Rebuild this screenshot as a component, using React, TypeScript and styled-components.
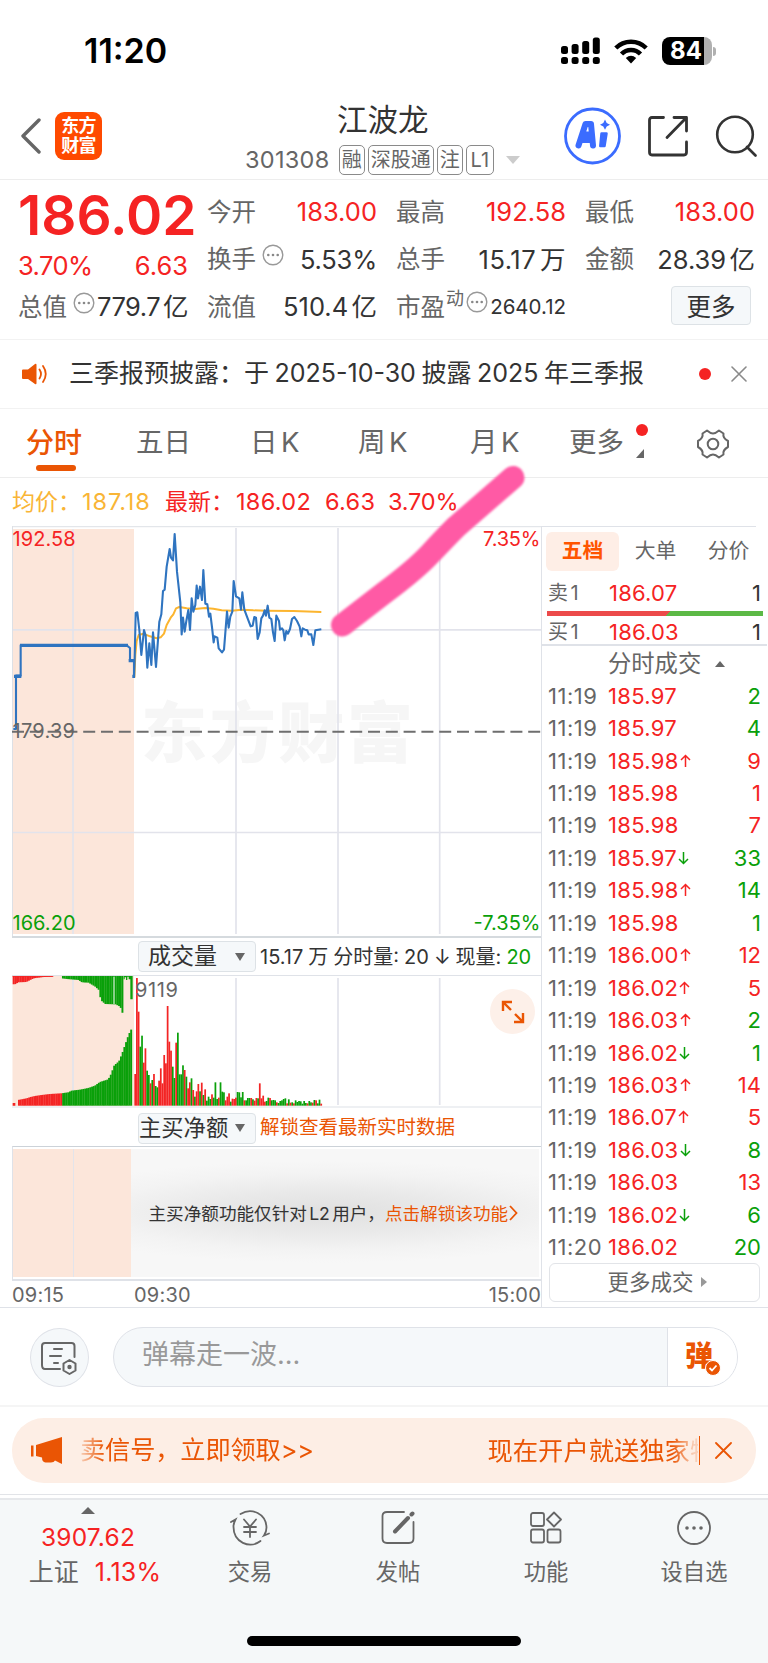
import React from "react";
import styled, { createGlobalStyle } from "styled-components";

const RED = "#f52323";
const GREEN = "#0aa00a";
const ORANGE = "#ea5504";
const GREY = "#666";
const DARK = "#333";
const PEACH = "#fce6da";
const LINE = "#dfe2e8";

const Global = createGlobalStyle`
  * { box-sizing: border-box; }
  body { margin: 0; background: #fff; }
  svg { display: block; flex: none; }
`;

const Page = styled.div`
  position: relative;
  width: 768px;
  height: 1663px;
  overflow: hidden;
  background: #fff;
  color: ${DARK};
  font-family: Inter, "Noto Sans CJK SC", sans-serif;
  line-height: 1;
`;

const Txt = styled.span<{ $s: number; $c?: string; $ls?: number; $w?: number; $ws?: number }>`
  flex: none;
  white-space: pre;
  font-size: ${(p) => p.$s}px;
  color: ${(p) => p.$c ?? DARK};
  letter-spacing: ${(p) => p.$ls ?? 0}px;
  word-spacing: ${(p) => p.$ws ?? -0.15}em;
  font-weight: ${(p) => p.$w ?? 400};
`;

/* Status bar */
const StatusBar = styled.div`
  height: 100px;
  padding: 2px 52px 0 84px;
  display: flex;
  align-items: center;
  justify-content: space-between;
`;
const StatusIcons = styled.div`
  display: flex;
  align-items: center;
  gap: 14px;
`;
const Battery = styled.div`
  display: flex;
  align-items: center;
  gap: 1px;
`;
const BatteryBody = styled.div`
  width: 50px;
  height: 28px;
  padding-right: 2px;
  border-radius: 8px;
  background: linear-gradient(90deg, #000 84%, #b0b0b0 84%);
  display: flex;
  align-items: center;
  justify-content: center;
`;
const BatteryTip = styled.div`
  width: 3px;
  height: 9px;
  border-radius: 0 3px 3px 0;
  background: #b0b0b0;
`;

/* Header */
const Header = styled.header`
  height: 80px;
  display: flex;
  border-bottom: 1px solid #ededed;
  padding: 0 10px 0 20px;
`;
const HeaderLeft = styled.div`
  width: 225px;
  height: 71px;
  display: flex;
  align-items: center;
  gap: 13px;
`;
const Logo = styled.div`
  width: 47px;
  height: 48px;
  border-radius: 9px;
  background: #ff4a00;
  display: flex;
  flex-direction: column;
  align-items: center;
  justify-content: center;
  gap: 2px;
`;
const HeaderTitle = styled.div`
  width: 277px;
  display: flex;
  flex-direction: column;
`;
const TitleRow = styled.div`
  height: 41px;
  padding: 5px 0 0 92px;
`;
const TagRow = styled.div`
  display: flex;
  align-items: center;
  gap: 3px;
  height: 40px;
  padding-top: 1px;
`;
const Tag = styled.span<{ $w: number }>`
  width: ${(p) => p.$w}px;
  height: 30px;
  border: 1.5px solid #8a8a8a;
  border-radius: 5px;
  display: flex;
  align-items: center;
  justify-content: center;
`;
const HeaderRight = styled.div`
  flex: 1;
  height: 71px;
  padding-left: 42px;
  display: flex;
  align-items: center;
  gap: 27px;
`;

/* Quote block */
const Quote = styled.section`
  height: 160px;
  padding: 8px 13px 0 18px;
  border-bottom: 1px solid #f2f2f2;
  display: grid;
  grid-template-columns: repeat(4, 170px);
  column-gap: 19px;
`;
const QuoteCol = styled.div`
  display: flex;
  flex-direction: column;
`;
const QuoteRow = styled.div<{ $h: number }>`
  height: ${(p) => p.$h}px;
  display: flex;
  align-items: center;
  justify-content: space-between;
`;
const LabelGroup = styled.div`
  display: flex;
  align-items: center;
`;
const Raised = styled.span<{ $l: number; $t: number }>`
  margin-left: ${(p) => p.$l}px;
  margin-top: -${(p) => p.$t}px;
`;
const MoreButton = styled.button`
  width: 80px;
  height: 39px;
  margin: -4px 4px 0 auto;
  padding: 0;
  border: 1.5px solid #dde2e6;
  border-radius: 4px;
  background: #f5f8fa;
  font-family: inherit;
`;

/* Notice */
const Notice = styled.div`
  height: 69px;
  padding: 0 21px 1px 22px;
  border-bottom: 1px solid #f2f2f2;
  display: flex;
  align-items: center;
`;
const NoticeText = styled.div`
  width: 628px;
  padding-left: 21px;
`;
const Dot = styled.i`
  display: block;
  width: 12px;
  height: 12px;
  border-radius: 50%;
  background: ${RED};
`;

/* Tabs */
const Tabs = styled.nav`
  height: 69px;
  border-bottom: 1px solid #ededed;
  display: flex;
  padding-left: 26px;
`;
const Tab = styled.div<{ $w: number }>`
  width: ${(p) => p.$w}px;
  height: 64px;
  display: flex;
  flex-direction: column;
  align-items: flex-start;
  padding-top: 20px;
`;
const Underline = styled.div`
  width: 40px;
  height: 6px;
  margin: 8px 0 0 10px;
  border-radius: 3px;
  background: ${ORANGE};
`;
const MoreTab = styled.div`
  display: flex;
  gap: 12px;
`;
const MoreMarks = styled.div`
  display: flex;
  flex-direction: column;
  gap: 13px;
  margin-top: -5px;
`;

const Legend = styled.div`
  height: 48px;
  padding: 0 0 0 12px;
  display: flex;
  align-items: center;
`;
const LegendItem = styled.div<{ $w: number }>`
  width: ${(p) => p.$w}px;
`;

/* Main area */
const Main = styled.main`
  height: 782px;
  display: flex;
  border-bottom: 1px solid ${LINE};
`;
const ChartCol = styled.div`
  width: 542px;
  padding-left: 12px;
  border-right: 1px solid ${LINE};
`;
const PanelHead = styled.div<{ $h: number; $top?: number }>`
  height: ${(p) => p.$h}px;
  padding: ${(p) => p.$top ?? 0}px 0 0 126px;
  display: flex;
  align-items: center;
  gap: 4px;
`;
const Dropdown = styled.div<{ $pad: number }>`
  width: 118px;
  height: 31px;
  padding: 0 10px 0 ${(p) => p.$pad}px;
  border: 1.5px solid #dde2e6;
  border-radius: 4px;
  background: #f5f8fa;
  display: flex;
  align-items: center;
  justify-content: space-between;
`;
const VolumeWrap = styled.div`
  position: relative;
  height: 133px;
  border-top: 1px solid ${LINE};
  border-bottom: 2px solid #eef0f3;
`;
const ExpandButton = styled.div`
  position: absolute;
  right: 6px;
  top: 13px;
  width: 45px;
  height: 45px;
  border-radius: 50%;
  background: #fdf0e9;
  display: flex;
  align-items: center;
  justify-content: center;
`;
const LockPanel = styled.div`
  height: 135px;
  border-top: 1px solid #ccd2d8;
  border-bottom: 2px solid ${LINE};
  border-left: 1px solid ${LINE};
  padding: 2px 2px;
  display: flex;
`;
const AuctionBlock = styled.div`
  width: 117.5px;
  margin-left: -2px;
  background: linear-gradient(90deg, transparent 60px, #e3e4ea 60px, #e3e4ea 61.5px, transparent 61.5px) ${PEACH};
`;
const LockMessage = styled.div`
  flex: 1;
  background:
    radial-gradient(ellipse 75% 40% at 48% 49%, #e0e0e0 0%, #e9e9e9 40%, #f3f3f3 75%, rgba(247, 247, 247, 0) 100%)
    #f7f7f7;
  padding: 2px 0 0 18px;
  display: flex;
  align-items: center;
`;
const TimeAxis = styled.div`
  height: 27px;
  padding-top: 1px;
  display: flex;
  align-items: center;
`;
const AxisCell = styled.div<{ $w?: number }>`
  width: ${(p) => (p.$w ? p.$w + "px" : "auto")};
  margin-left: ${(p) => (p.$w ? "0" : "auto")};
`;

const SideCol = styled.div`
  width: 226px;
  display: flex;
  flex-direction: column;
`;
const SideTabs = styled.div`
  height: 49px;
  padding: 5px 0 0 4px;
  border-top: 1px solid ${LINE};
  margin-right: 12px;
  display: flex;
`;
const SideTab = styled.div<{ $on?: boolean }>`
  flex: none;
  width: 73px;
  height: 39px;
  border-radius: 6px;
  background: ${(p) => (p.$on ? "#feeee6" : "transparent")};
  display: flex;
  align-items: center;
  justify-content: center;
`;
const OrderRow = styled.div<{ $h: number; $top?: number }>`
  height: ${(p) => p.$h}px;
  padding: ${(p) => p.$top ?? 0}px 7px 0 6px;
  display: flex;
  align-items: center;
`;
const SideCell = styled.div<{ $w: number }>`
  width: ${(p) => p.$w}px;
`;
const Qty = styled.div`
  margin-left: auto;
`;
const RatioBar = styled.div`
  height: 5px;
  margin: 0 5px;
  background: linear-gradient(135deg, #ec4a4a 56%, #5cb946 56%);
`;
const DealHead = styled.div`
  height: 35px;
  margin-right: 1px;
  border-top: 2px solid ${LINE};
  padding: 3px 0 0 66px;
  display: flex;
  align-items: center;
  gap: 14px;
`;
const MoreDeals = styled.div`
  width: 211px;
  height: 39px;
  margin: 0 0 0 7px;
  padding-left: 5px;
  border: 1.5px solid #e2e4e8;
  border-radius: 6px;
  display: flex;
  align-items: center;
  justify-content: center;
  gap: 7px;
`;

/* Comment bar */
const CommentBar = styled.div`
  height: 99px;
  padding: 19px 30px;
  border-bottom: 2px solid #f5f5f5;
  display: flex;
  gap: 24px;
`;
const RoundButton = styled.div`
  width: 59px;
  height: 59px;
  margin-top: 1px;
  border: 1.5px solid ${LINE};
  border-radius: 50%;
  background: #f5f8fa;
  display: flex;
  align-items: center;
  justify-content: center;
`;
const InputPill = styled.div`
  width: 626px;
  height: 60px;
  border: 1.5px solid ${LINE};
  border-radius: 30px;
  background: #f5f8fa;
  display: flex;
  overflow: hidden;
`;
const InputArea = styled.div`
  flex: 1;
  padding: 13px 0 0 28px;
`;
const DanmuToggle = styled.div`
  width: 70px;
  border-left: 1.5px solid ${LINE};
  background: #fff;
  padding: 14px 0 0 17px;
  display: flex;
`;
const CheckBadge = styled.div`
  margin: 18px 0 0 -8px;
`;

/* Banner */
const BannerWrap = styled.div`
  height: 88px;
  padding: 11px 12px 0;
  border-bottom: 1px solid #e2e4e8;
`;
const Banner = styled.div`
  height: 65px;
  border-radius: 32px;
  background: #fdeee5;
  display: flex;
  align-items: center;
  padding: 0 24px 0 19px;
`;
const Marquee = styled.div`
  width: 618px;
  margin-left: 18px;
  overflow: hidden;
  display: flex;
  align-items: center;
  justify-content: space-between;
  height: 40px;
  mask-image: linear-gradient(90deg, rgba(0, 0, 0, 0.2) 0, #000 24px, #000 592px, rgba(0, 0, 0, 0.2) 614px);
`;
const MarqueeEnd = styled.div`
  width: 210px;
  overflow: hidden;
`;
const BannerRule = styled.div`
  width: 1.5px;
  height: 29px;
  background: ${ORANGE};
  margin: 0 15px 0 1px;
`;

/* Bottom navigation */
const BottomNav = styled.footer`
  height: 165px;
  margin-top: 3px;
  border-top: 2px solid #e6e8eb;
  background: #f5f8f9;
  display: flex;
  flex-direction: column;
  align-items: center;
`;
const NavItems = styled.div`
  width: 768px;
  height: 136px;
  display: flex;
`;
const IndexCell = styled.div`
  width: 176px;
  padding-top: 7px;
  display: flex;
  flex-direction: column;
  align-items: center;
`;
const IndexValue = styled.div`
  display: flex;
  height: 26px;
  align-items: center;
  margin-top: 10px;
`;
const IndexChange = styled.div`
  display: flex;
  height: 26px;
  align-items: center;
  gap: 16px;
  margin: 9px 0 0 14px;
`;
const NavItem = styled.div`
  width: 148px;
  padding-top: 10px;
  display: flex;
  flex-direction: column;
  align-items: center;
  gap: 15px;
`;
const HomeIndicator = styled.div`
  width: 274px;
  height: 10px;
  border-radius: 5px;
  background: #000;
`;

const Marker = styled.svg`
  position: absolute;
  left: 320px;
  top: 450px;
  filter: blur(1px);
`;

const MoreDots = ({ size = 22 }: { size?: number }) => (
  <svg width={size} height={size} viewBox="0 0 22 22" fill="none" stroke="#999" strokeWidth="1.4">
    <circle cx="11" cy="11" r="9.8" />
    <g fill="#888" stroke="none">
      <circle cx="6.3" cy="11" r="1.3" />
      <circle cx="11" cy="11" r="1.3" />
      <circle cx="15.7" cy="11" r="1.3" />
    </g>
  </svg>
);

const Triangle = ({ w, h, up, color = GREY }: { w: number; h: number; up?: boolean; color?: string }) => (
  <svg width={w} height={h}>
    <path d={up ? `M0 ${h}L${w / 2} 0L${w} ${h}z` : `M0 0L${w / 2} ${h}L${w} 0z`} fill={color} />
  </svg>
);

const Cross = ({ size, color, sw }: { size: number; color: string; sw: number }) => (
  <svg width={size} height={size}>
    <path d={`M1 1L${size - 1} ${size - 1}M${size - 1} 1L1 ${size - 1}`} stroke={color} strokeWidth={sw} strokeLinecap="round" />
  </svg>
);

const PRICE =
  "402,488 404,430 407,294 412,292 418,345 424,420 432,345 437,362 442,458 448,385 454,450 459,352 468,456 478,320 484,298 489,228 494,224 500,155 509,102 513,128 519,136 524,57 531,170 541,262 545,358 549,308 554,350 559,318 565,285 570,345 575,250 580,290 586,270 590,212 594,250 600,215 606,255 610,165 616,266 622,268 627,305 631,296 637,345 641,382 644,364 652,368 656,400 666,412 672,404 681,290 686,338 691,305 697,290 701,198 708,244 718,250 723,284 727,232 733,284 742,308 752,334 758,332 763,306 768,308 773,372 779,352 784,310 789,302 794,286 798,302 803,272 808,308 814,312 819,352 824,378 829,302 837,318 840,344 846,340 850,346 854,376 859,348 864,356 870,342 876,312 883,306 891,318 899,335 904,364 908,340 915,344 922,346 926,358 934,358 940,390 946,346 964,343";
const AVERAGE =
  "403,488 406,420 410,378 416,360 430,356 450,364 470,370 482,367 492,356 500,330 512,308 520,298 528,280 538,276 560,280 585,282 615,279 640,281 665,286 695,287 725,284 760,286 800,287 880,288 964,291";

const svgFont = { fontFamily: 'Inter, "Noto Sans CJK SC", sans-serif' };

const PriceChart = () => (
  <svg width="529" height="412" viewBox="12 526 529 412" {...svgFont}>
    <rect x="12.5" y="529" width="121.5" height="405" fill={PEACH} />
    <text x="141" y="757" fontSize="66" fontWeight="900" textLength="272" fill="#f6f6f6">东方财富</text>
    <g stroke="#e2e3eb" strokeWidth="1.7">
      <path d="M73 529V934M236 528V934M338 528V934M439.7 528V934M12 629.8H541M12 832.5H541" />
    </g>
    <path d="M12 526.7H541M12.5 526V938" stroke="#dde0e5" strokeWidth="1" />
    <path d="M12 937H541" stroke="#d5dade" strokeWidth="2" />
    <path d="M12 731.8H541" stroke="#6e6e6e" strokeWidth="2" strokeDasharray="12 5.8" />
    <g transform="translate(0 515) scale(.33333)" fill="none" strokeLinejoin="round">
      <polyline points={AVERAGE} stroke="#fcb52f" strokeWidth="6" />
      <polyline points={PRICE} stroke="#2f74c0" strokeWidth="6.300" />
      <path d="M40 642H48V482H62V391H380L390 399V437H402V486" stroke="#2f74c0" strokeWidth="6.300" />
      <path d="M60 391H384M42 484H64M386 437H402M397 484H405" stroke="#2f74c0" strokeWidth="10" />
    </g>
    <g fontSize="20">
      <text x="12.5" y="545.8" textLength="63" fill={RED}>192.58</text>
      <text x="483" y="545.8" textLength="57.5" fill={RED}>7.35%</text>
      <text x="12.5" y="738" textLength="62.5" fill={GREY}>179.39</text>
      <text x="12.5" y="929.5" textLength="63" fill={GREEN}>166.20</text>
      <text x="473.5" y="929.5" textLength="67" fill={GREEN}>-7.35%</text>
    </g>
  </svg>
);

const VOLUME =
  "462r 174r 275r 380g 347g 428r 385r 452g 465g 490r 480g 462r 498g 502g 482r 445r 490r 405r 430r 258r 365r 392r 440g 474g 368r 338g 463g 463g 436g 450r 470g 505r 487r 475g 510r 530g 514r 492r 514g 488r 525g 508r 542g 530g 537g 523r 533g 487g 537g 533r 487g 515g 517g 541r 530r 520r 545g 536r 537r 533r 516g 517g 532g 516g 541r 541g 534g 534g 534r 538g 542r 534r 535g 490r 535r 527r 545r 543g 533g 534r 541g 540g 541g 547r 549g 543g 541g 537g 535g 550r 538g 548r 547g 550r 541g 546g 543g 544g 551g 543g 549g 550r 543g 547g 548r 540g 541r 550g 539g 551r".split(
    " "
  );

const AUCTION_LOW: [number, number][] = [
  [54, 540], [80, 535], [92, 531], [105, 528], [125, 525], [150, 522], [184, 520], [205, 517], [215, 512], [240, 509],
  [265, 504], [285, 497], [300, 486], [325, 478], [333, 463], [343, 436], [357, 424], [366, 402], [376, 373], [386, 344], [394, 328], [400, 328],
];
const AUCTION_TOP: [number, number][] = [
  [38, 193], [48, 192], [52, 187], [78, 186], [90, 180], [100, 175], [130, 171], [156, 170], [184, 175], [200, 177], [235, 180],
  [245, 187], [265, 188], [285, 200], [298, 212], [301, 240], [315, 252], [346, 253], [360, 260], [367, 280], [372, 281],
];

const level = (pts: [number, number][], x: number) => {
  for (let i = 1; i < pts.length; i++) {
    if (x <= pts[i][0]) {
      const [x0, y0] = pts[i - 1];
      const [x1, y1] = pts[i];
      return y0 + ((y1 - y0) * (x - x0)) / (x1 - x0);
    }
  }
  return pts[pts.length - 1][1];
};
const steps = (from: number, to: number) => Array.from({ length: Math.round((to - from) / 5.1) }, (_, i) => from + i * 5.1);

const VolumeChart = () => (
  <svg width="529" height="130" viewBox="12 976 529 130" {...svgFont}>
    <rect x="12.5" y="976" width="121.5" height="130" fill={PEACH} />
    <path d="M73 976V1105M236 978V1105M338 978V1105M439.7 978V1105" stroke="#e2e3eb" strokeWidth="1.7" />
    <g transform="translate(0 920) scale(.33333)">
      {steps(54, 398).map((x) => {
        const y = level(AUCTION_LOW, x + 3);
        return <rect key={x} x={x} y={y} width="5.8" height={557 - y} fill={x < 182 ? "#f32424" : GREEN} />;
      })}
      {steps(38, 371).map((x) => {
        const y = level(AUCTION_TOP, x + 2);
        return <rect key={x} x={x} y="166" width="5.8" height={y - 166} fill={x < 158 ? "#f32424" : x < 184 ? PEACH : GREEN} />;
      })}
      <path d="M38 166H158V170H38M38 549H46V557H38" fill="#f32424" />
      <path d="M371 166H398V238H391V178H386V170H382V180H378V172H374V178H371" fill={GREEN} />
      <path d="M342 170V252" stroke="#fff" strokeWidth="3" />
      {VOLUME.map((v, i) => {
        const y = parseInt(v, 10);
        return <rect key={i} x={403 + i * 5.12} y={y} width="5.2" height={557 - y} fill={v.endsWith("r") ? "#f32424" : GREEN} />;
      })}
    </g>
    <text x="135" y="997" fontSize="20" textLength="43" fill={GREY}>9119</text>
  </svg>
);

type Deal = [string, string, "u" | "d" | "", number, "r" | "g"];
const DEALS: Deal[] = [
  ["11:19", "185.97", "", 2, "g"],
  ["11:19", "185.97", "", 4, "g"],
  ["11:19", "185.98", "u", 9, "r"],
  ["11:19", "185.98", "", 1, "r"],
  ["11:19", "185.98", "", 7, "r"],
  ["11:19", "185.97", "d", 33, "g"],
  ["11:19", "185.98", "u", 14, "g"],
  ["11:19", "185.98", "", 1, "g"],
  ["11:19", "186.00", "u", 12, "r"],
  ["11:19", "186.02", "u", 5, "r"],
  ["11:19", "186.03", "u", 2, "g"],
  ["11:19", "186.02", "d", 1, "g"],
  ["11:19", "186.03", "u", 14, "r"],
  ["11:19", "186.07", "u", 5, "r"],
  ["11:19", "186.03", "d", 8, "g"],
  ["11:19", "186.03", "", 13, "r"],
  ["11:19", "186.02", "d", 6, "g"],
  ["11:20", "186.02", "", 20, "g"],
];

const TickArrow = ({ dir }: { dir: "u" | "d" }) => (
  <svg width="11" height="14" fill="none" stroke={dir === "u" ? RED : GREEN} strokeWidth="1.5">
    <path d={dir === "u" ? "M5.5 13V1.5M1 6L5.5 1.5L10 6" : "M5.5 1V12.5M1 8L5.5 12.5L10 8"} />
  </svg>
);

const Stat = ({ h, label, value, red, dots, ls }: { h: number; label: string; value: string; red?: boolean; dots?: boolean; ls?: number }) => (
  <QuoteRow $h={h}>
    <LabelGroup>
      <Txt $s={24.5} $c={GREY}>{label}</Txt>
      {dots && <Raised $l={6} $t={9}><MoreDots /></Raised>}
    </LabelGroup>
    <Txt $s={25.5} $c={red ? RED : DARK} $ls={ls ?? 0}>{value}</Txt>
  </QuoteRow>
);

const TABS: [string, number][] = [["五日", 114], ["日 K", 108], ["周 K", 112], ["月 K", 99]];

export default function App() {
  return (
    <Page>
      <Global />
      <StatusBar>
        <Txt $s={34} $c="#000" $w={600}>11:20</Txt>
        <StatusIcons>
          <svg width="39" height="28">
            {[0, 1, 2, 3].map((i) => (
              <g key={i}>
                <rect x={i * 10.6} y={[9, 7, 4, 0.5][i]} width="7" height={[8, 10, 13, 16.5][i]} rx="2.5" />
                <rect x={i * 10.6} y="20" width="7" height="7" rx="2.5" />
              </g>
            ))}
          </svg>
          <svg width="34" height="25" viewBox="0 0 34 25" fill="none" stroke="#000" strokeWidth="4.4">
            <path d="M1.8 9C10 .6 24 .6 32.200 9" />
            <path d="M7.500 15C12.500 9.600 21.500 9.600 26.500 15" />
            <path d="M17 24.500L11.800 19Q17 14.500 22.200 19z" fill="#000" stroke="none" />
          </svg>
          <Battery>
            <BatteryBody><Txt $s={24} $c="#fff" $w={700}>84</Txt></BatteryBody>
            <BatteryTip />
          </Battery>
        </StatusIcons>
      </StatusBar>

      <Header>
        <HeaderLeft>
          <svg width="22" height="36" fill="none" stroke={GREY} strokeWidth="3.400" strokeLinecap="round" strokeLinejoin="round">
            <path d="M19 2L3 18L19 34" />
          </svg>
          <Logo>
            <Txt $s={18} $c="#fff" $w={600} $ls={-0.8}>东方</Txt>
            <Txt $s={18} $c="#fff" $w={600} $ls={-0.8}>财富</Txt>
          </Logo>
        </HeaderLeft>
        <HeaderTitle>
          <TitleRow><Txt $s={30.500}>江波龙</Txt></TitleRow>
          <TagRow>
            <LabelGroup><Txt $s={23.500} $c={GREY} $ls={0.3} $ws={-0.03}>301308 </Txt></LabelGroup>
            <Tag $w={26}><Txt $s={20} $c={GREY}>融</Txt></Tag>
            <Tag $w={66}><Txt $s={20} $c={GREY}>深股通</Txt></Tag>
            <Tag $w={26}><Txt $s={20} $c={GREY}>注</Txt></Tag>
            <Tag $w={28}><Txt $s={20} $c={GREY}>L1</Txt></Tag>
            <Raised $l={9} $t={0}><Triangle w={14} h={8} color="#ccc" /></Raised>
          </TagRow>
        </HeaderTitle>
        <HeaderRight>
          <svg width="57" height="58" viewBox="0 0 57 58">
            <circle cx="28.500" cy="29" r="27" fill="none" stroke="#3b6cff" strokeWidth="2.800" />
            <path d="M14.500 38.500L21.500 17H27L29 38.500M17.500 33H28M22.300 27.500H24.800" fill="none" stroke="#3b6cff" strokeWidth="6" strokeLinejoin="round" strokeLinecap="round" />
            <path d="M37.500 26.500H42.500L40.500 39H36.300z" fill="#3b6cff" stroke="#3b6cff" strokeWidth="2.500" strokeLinejoin="round" />
            <path d="M41 12.500L42.700 16.100L46 17.800L42.700 19.500L41 22.800L39.300 19.500L36 17.800L39.300 16.100z" fill="#3b6cff" />
          </svg>
          <svg width="40" height="42" viewBox="0 0 40 42" fill="none" stroke={DARK} strokeWidth="2.800" strokeLinecap="round" strokeLinejoin="round">
            <path d="M15.500 2.500H4Q1.500 2.500 1.500 5V37Q1.500 40 4 40H36Q38.500 40 38.500 37V27M26 2.500H38.500V16M38 3L19 22.500" />
          </svg>
          <svg width="42" height="42" viewBox="0 0 42 42" fill="none" stroke={DARK} strokeWidth="2.600" strokeLinecap="round">
            <circle cx="20" cy="19.500" r="17.800" />
            <path d="M32 32L40.500 40.500" />
          </svg>
        </HeaderRight>
      </Header>

      <Quote>
        <QuoteCol>
          <QuoteRow $h={54}><Txt $s={55} $c={RED} $w={600}>186.02</Txt></QuoteRow>
          <QuoteRow $h={48}>
            <Txt $s={25.500} $c={RED} $ls={-0.6}>3.70%</Txt>
            <Txt $s={25.500} $c={RED}>6.63</Txt>
          </QuoteRow>
          <Stat h={34} label="总值" value="779.7 亿" dots ls={-0.5} />
        </QuoteCol>
        <QuoteCol>
          <Stat h={48} label="今开" value="183.00" red />
          <Stat h={47} label="换手" value="5.53%" dots ls={-0.2} />
          <Stat h={48} label="流值" value="510.4 亿" />
        </QuoteCol>
        <QuoteCol>
          <Stat h={48} label="最高" value="192.58" red />
          <Stat h={47} label="总手" value="15.17 万" ls={0.5} />
          <QuoteRow $h={48}>
            <LabelGroup>
              <Txt $s={24.500} $c={GREY}>市盈</Txt>
              <Raised $l={1} $t={16}><Txt $s={18} $c={GREY}>动</Txt></Raised>
              <Raised $l={2} $t={10}><MoreDots /></Raised>
            </LabelGroup>
            <Txt $s={20.500}>2640.12</Txt>
          </QuoteRow>
        </QuoteCol>
        <QuoteCol>
          <Stat h={48} label="最低" value="183.00" red />
          <Stat h={47} label="金额" value="28.39 亿" />
          <QuoteRow $h={48}><MoreButton><Txt $s={24.500}>更多</Txt></MoreButton></QuoteRow>
        </QuoteCol>
      </Quote>

      <Notice>
        <svg width="26" height="22" viewBox="0 0 26 22" fill={ORANGE}>
          <path d="M1 6.500H6L13 1Q14.500 0 14.500 2V20Q14.500 22 13 21L6 16H1Q0 16 0 15V7.500Q0 6.500 1 6.500" />
          <path d="M17.500 6.500Q20.500 11 17.500 15.500M21 3Q26.500 11 21 19" fill="none" stroke={ORANGE} strokeWidth="1.800" strokeLinecap="round" />
        </svg>
        <NoticeText><Txt $s={25} $ws={-0.06}>三季报预披露：于 2025-10-30 披露 2025 年三季报</Txt></NoticeText>
        <Raised $l={23} $t={0}><Dot /></Raised>
        <Raised $l={20} $t={0}><Cross size={16} color="#8a8a8a" sw={1.6} /></Raised>
      </Notice>

      <Tabs>
        <Tab $w={110}>
          <Txt $s={28} $c={ORANGE} $w={500}>分时</Txt>
          <Underline />
        </Tab>
        {TABS.map(([t, w]) => (
          <Tab key={t} $w={w}><Txt $s={27.500} $c={GREY}>{t}</Txt></Tab>
        ))}
        <Tab $w={128}>
          <MoreTab>
            <Txt $s={27.500} $c={GREY}>更多</Txt>
            <MoreMarks>
              <Dot />
              <svg width="8" height="9"><path d="M8 0V9H0z" fill={GREY} /></svg>
            </MoreMarks>
          </MoreTab>
        </Tab>
        <Tab $w={34}>
          <svg width="32" height="30" viewBox="0 0 32 30" fill="none" stroke={GREY} strokeWidth="2" strokeLinejoin="round">
            <path d="M10 1.500Q13.500 4.500 16 4.500T22 1.500L26.500 4.500Q25.500 9 31 12V18Q25.500 21 26.500 25.500L22 28.500Q18.500 25.500 16 25.500T10 28.500L5.500 25.500Q6.500 21 1 18V12Q6.500 9 5.500 4.500z" />
            <circle cx="16" cy="15" r="5.300" />
          </svg>
        </Tab>
      </Tabs>

      <Legend>
        <LegendItem $w={70}><Txt $s={23} $c="#f9b536">均价：</Txt></LegendItem>
        <LegendItem $w={83}><Txt $s={23.500} $c="#f9b536" $ls={0.9}>187.18</Txt></LegendItem>
        <LegendItem $w={71}><Txt $s={23} $c={RED}>最新：</Txt></LegendItem>
        <LegendItem $w={89}><Txt $s={23.500} $c={RED} $ls={0.3}>186.02</Txt></LegendItem>
        <LegendItem $w={63}><Txt $s={23.500} $c={RED} $ls={0.3}>6.63</Txt></LegendItem>
        <Txt $s={23.500} $c={RED} $ls={-0.2}>3.70%</Txt>
      </Legend>

      <Main>
        <ChartCol>
          <PriceChart />
          <PanelHead $h={37}>
            <Dropdown $pad={9}>
              <Txt $s={23}>成交量</Txt>
              <Triangle w={10} h={8} />
            </Dropdown>
            <Txt $s={20} $ws={-0.03}>15.17 万 分时量: 20 ↓ 现量: <Txt $s={20} $c={GREEN}>20</Txt></Txt>
          </PanelHead>
          <VolumeWrap>
            <VolumeChart />
            <ExpandButton>
              <svg width="24" height="24" fill="none" stroke={ORANGE} strokeWidth="2.400">
                <path d="M2 11V2H11M2 2L10 10M22 13V22H13M22 22L14 14" />
              </svg>
            </ExpandButton>
          </VolumeWrap>
          <PanelHead $h={38} $top={2}>
            <Dropdown $pad={0}>
              <Txt $s={22.300}>主买净额</Txt>
              <Triangle w={10} h={8} />
            </Dropdown>
            <Txt $s={19.500} $c={ORANGE}>解锁查看最新实时数据</Txt>
          </PanelHead>
          <LockPanel>
            <AuctionBlock />
            <LockMessage>
              <Txt $s={17.600}>主买净额功能仅针对 L2 用户，</Txt>
              <Txt $s={17.600} $c={ORANGE}>点击解锁该功能</Txt>
              <Raised $l={1} $t={2}>
                <svg width="9" height="16" fill="none" stroke={ORANGE} strokeWidth="1.800"><path d="M1 1L7.500 8L1 15" /></svg>
              </Raised>
            </LockMessage>
          </LockPanel>
          <TimeAxis>
            <AxisCell $w={122}><Txt $s={20} $c={GREY} $ls={0.2}>09:15</Txt></AxisCell>
            <AxisCell $w={122}><Txt $s={20} $c={GREY} $ls={0.2}>09:30</Txt></AxisCell>
            <AxisCell><Txt $s={20} $c={GREY} $ls={0.2}>15:00</Txt></AxisCell>
          </TimeAxis>
        </ChartCol>

        <SideCol>
          <SideTabs>
            <SideTab $on><Txt $s={20.800} $c="#ff5500" $w={700}>五档</Txt></SideTab>
            <SideTab><Txt $s={20.800} $c={GREY}>大单</Txt></SideTab>
            <SideTab><Txt $s={20.800} $c={GREY}>分价</Txt></SideTab>
          </SideTabs>
          <OrderRow $h={36}>
            <SideCell $w={61}><Txt $s={20} $c={GREY}>卖 1</Txt></SideCell>
            <Txt $s={22} $c={RED} $ls={0.2}>186.07</Txt>
            <Qty><Txt $s={22}>1</Txt></Qty>
          </OrderRow>
          <RatioBar />
          <OrderRow $h={28} $top={4}>
            <SideCell $w={61}><Txt $s={20} $c={GREY}>买 1</Txt></SideCell>
            <Txt $s={22} $c={RED} $ls={0.2}>186.03</Txt>
            <Qty><Txt $s={22}>1</Txt></Qty>
          </OrderRow>
          <DealHead>
            <Txt $s={23.300} $c={GREY}>分时成交</Txt>
            <Triangle w={10} h={6} up />
          </DealHead>
          {DEALS.map(([time, price, dir, qty, tone], i) => (
            <OrderRow key={i} $h={32.45} $top={1}>
              <SideCell $w={60}><Txt $s={22} $c={GREY} $ls={0.5}>{time}</Txt></SideCell>
              <Txt $s={22} $c={RED} $ls={0.3}>{price}</Txt>
              {dir && <Raised $l={1} $t={0}><TickArrow dir={dir} /></Raised>}
              <Qty><Txt $s={22} $c={tone === "r" ? RED : GREEN}>{qty}</Txt></Qty>
            </OrderRow>
          ))}
          <MoreDeals>
            <Txt $s={21.500} $c={GREY}>更多成交</Txt>
            <svg width="6" height="10"><path d="M0 0L6 5L0 10z" fill="#999" /></svg>
          </MoreDeals>
        </SideCol>
      </Main>

      <CommentBar>
        <RoundButton>
          <svg width="36" height="34" viewBox="0 0 36 34" fill="none" stroke={GREY} strokeWidth="2" strokeLinecap="round">
            <path d="M33.500 16V5Q33.500 2 30.500 2H4Q1 2 1 5V24Q1 28 4 28H19M13 8H21M9 15H20M13 22H17" />
            <path d="M28.500 19L34.500 22.500V29.500L28.500 33L22.500 29.500V22.500z" strokeLinejoin="round" />
            <circle cx="28.500" cy="26" r="1.200" fill={GREY} />
          </svg>
        </RoundButton>
        <InputPill>
          <InputArea><Txt $s={27} $c="#999">弹幕走一波...</Txt></InputArea>
          <DanmuToggle>
            <Txt $s={28} $c={ORANGE} $w={900}>弹</Txt>
            <CheckBadge>
              <svg width="16" height="16" viewBox="0 0 16 16">
                <circle cx="8" cy="8" r="7.500" fill={ORANGE} stroke="#fff" />
                <path d="M4.500 8L7 10.500L11.500 5.500" fill="none" stroke="#fff" strokeWidth="1.800" />
              </svg>
            </CheckBadge>
          </DanmuToggle>
        </InputPill>
      </CommentBar>

      <BannerWrap>
        <Banner>
          <svg width="31" height="27" viewBox="0 0 31 27" fill={ORANGE}>
            <path d="M0 8.500H2.500V19.500H0zM5 8L31 0V27L24 23.500Q23 25.500 20 25.500H14.500Q11 25 11 20.500L5 19z" />
          </svg>
          <Marquee>
            <Txt $s={25.200} $c={ORANGE} $ls={-0.1}>卖信号，立即领取&gt;&gt;</Txt>
            <MarqueeEnd><Txt $s={25.300} $c={ORANGE}>现在开户就送独家特</Txt></MarqueeEnd>
          </Marquee>
          <BannerRule />
          <Cross size={17} color={ORANGE} sw={1.8} />
        </Banner>
      </BannerWrap>

      <BottomNav>
        <NavItems>
          <IndexCell>
            <Triangle w={14} h={7} up />
            <IndexValue><Txt $s={24.500} $c={RED} $ls={0.2}>3907.62</Txt></IndexValue>
            <IndexChange>
              <Txt $s={25} $c={GREY}>上证</Txt>
              <Txt $s={25} $c={RED} $ls={0.2}>1.13%</Txt>
            </IndexChange>
          </IndexCell>
          <NavItem>
            <svg width="40" height="36" viewBox="0 0 40 36" fill="none" stroke={GREY} strokeWidth="1.800" strokeLinecap="round">
              <path d="M10.500 4C22 -3 36 4 36.500 17.500Q36.500 22 34 25.500L39 23.500M30.500 31C20 39 3 33 3.500 16Q3.500 13.500 5.500 9.500L1 12" />
              <path d="M14 9.500L20 16.500L26 9.500M20 16.500V27M14 17H26M14 22H26" />
            </svg>
            <Txt $s={22.300} $c={GREY}>交易</Txt>
          </NavItem>
          <NavItem>
            <svg width="34" height="36" viewBox="0 0 34 36" fill="none" stroke={GREY} strokeWidth="1.800" strokeLinecap="round">
              <path d="M23 2H6Q1.500 2 1.500 6V28.500Q1.500 33 6 33H28Q32.500 33 32.500 28.500V12" />
              <path d="M14 21.500L27 8M30.500 4.500L31.500 3.500" strokeWidth="4" />
            </svg>
            <Txt $s={22.300} $c={GREY}>发帖</Txt>
          </NavItem>
          <NavItem>
            <svg width="34" height="36" viewBox="0 0 34 36" fill="none" stroke={GREY} strokeWidth="1.800" strokeLinejoin="round">
              <rect x="2" y="3" width="13" height="13" rx="2" />
              <rect x="2" y="19.500" width="13" height="13" rx="2" />
              <rect x="18.500" y="19.500" width="13" height="13" rx="2" />
              <path d="M25 2.500L32 9.500L25 16.500L18 9.500z" />
            </svg>
            <Txt $s={22.300} $c={GREY}>功能</Txt>
          </NavItem>
          <NavItem>
            <svg width="36" height="36" viewBox="0 0 36 36" fill="none" stroke={GREY} strokeWidth="1.800">
              <circle cx="18" cy="18" r="16" />
              <g fill={GREY} stroke="none">
                <circle cx="11" cy="18" r="1.800" />
                <circle cx="18" cy="18" r="1.800" />
                <circle cx="25" cy="18" r="1.800" />
              </g>
            </svg>
            <Txt $s={22.300} $c={GREY}>设自选</Txt>
          </NavItem>
        </NavItems>
        <HomeIndicator />
      </BottomNav>

      <Marker width="220" height="200" viewBox="320 450 220 200" fill="none">
        <path d="M342.500 625L384 593Q415 570 430 554T456 527L513 477.500" stroke="#ff5aa5" strokeWidth="23" strokeLinecap="round" strokeLinejoin="round" />
      </Marker>
    </Page>
  );
}
